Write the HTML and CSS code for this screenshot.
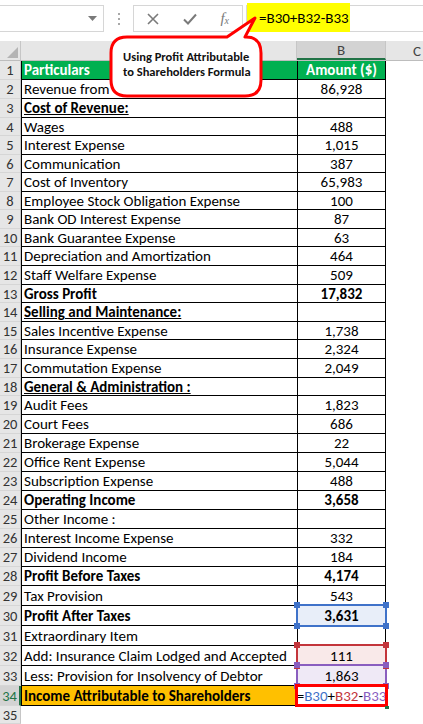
FILE: index.html
```html
<!DOCTYPE html>
<html>
<head>
<meta charset="utf-8">
<title>Income Attributable to Shareholders</title>
<link rel="stylesheet" href="styles.css">
</head>
<body>
<div class="fbar">
  <div class="namebox">
    <svg class="dd" width="9" height="5" viewBox="0 0 9 5"><path d="M0 0H9L4.5 5Z" fill="#7a7a7a"/></svg>
  </div>
  <div class="dots"><i></i><i></i><i></i></div>
  <div class="btns">
    <svg width="12" height="12" viewBox="0 0 12 12"><path d="M1 1L11 11M11 1L1 11" stroke="#7a7a7a" stroke-width="1.6" fill="none"/></svg>
    <svg width="14" height="12" viewBox="0 0 14 12"><path d="M1 6.5L5 10.5L13 1.5" stroke="#7a7a7a" stroke-width="2" fill="none"/></svg>
    <span class="fx">f<sub>x</sub></span>
  </div>
  <div class="formula"><span class="hl">=B30+B32-B33</span></div>
</div>

<div class="colheads">
  <div class="corner"><svg width="21" height="20" viewBox="0 0 21 20"><path d="M7 17H18V6Z" fill="#b4b4b4"/></svg></div>
  <div class="ch cha"></div>
  <div class="ch chb">B</div>
  <div class="ch chc">C</div>
</div>

<div class="grid">
  <div class="rh">1</div><div class="a head">Particulars</div><div class="b head">Amount ($)</div>
  <div class="rh">2</div><div class="a">Revenue from Operations</div><div class="b">86,928</div>
  <div class="rh">3</div><div class="a bold u">Cost of Revenue:</div><div class="b"></div>
  <div class="rh">4</div><div class="a">Wages</div><div class="b">488</div>
  <div class="rh">5</div><div class="a">Interest Expense</div><div class="b">1,015</div>
  <div class="rh">6</div><div class="a">Communication</div><div class="b">387</div>
  <div class="rh">7</div><div class="a">Cost of Inventory</div><div class="b">65,983</div>
  <div class="rh">8</div><div class="a">Employee Stock Obligation Expense</div><div class="b">100</div>
  <div class="rh">9</div><div class="a">Bank OD Interest Expense</div><div class="b">87</div>
  <div class="rh">10</div><div class="a">Bank Guarantee Expense</div><div class="b">63</div>
  <div class="rh">11</div><div class="a">Depreciation and Amortization</div><div class="b">464</div>
  <div class="rh">12</div><div class="a">Staff Welfare Expense</div><div class="b">509</div>
  <div class="rh">13</div><div class="a bold">Gross Profit</div><div class="b bold">17,832</div>
  <div class="rh">14</div><div class="a bold u">Selling and Maintenance:</div><div class="b"></div>
  <div class="rh">15</div><div class="a">Sales Incentive Expense</div><div class="b">1,738</div>
  <div class="rh">16</div><div class="a">Insurance Expense</div><div class="b">2,324</div>
  <div class="rh">17</div><div class="a">Commutation Expense</div><div class="b">2,049</div>
  <div class="rh">18</div><div class="a bold u">General &amp; Administration :</div><div class="b"></div>
  <div class="rh">19</div><div class="a">Audit Fees</div><div class="b">1,823</div>
  <div class="rh">20</div><div class="a">Court Fees</div><div class="b">686</div>
  <div class="rh">21</div><div class="a">Brokerage Expense</div><div class="b">22</div>
  <div class="rh">22</div><div class="a">Office Rent Expense</div><div class="b">5,044</div>
  <div class="rh">23</div><div class="a">Subscription Expense</div><div class="b">488</div>
  <div class="rh">24</div><div class="a bold">Operating Income</div><div class="b bold">3,658</div>
  <div class="rh">25</div><div class="a">Other Income :</div><div class="b"></div>
  <div class="rh">26</div><div class="a">Interest Income Expense</div><div class="b">332</div>
  <div class="rh">27</div><div class="a">Dividend Income</div><div class="b">184</div>
  <div class="rh">28</div><div class="a bold">Profit Before Taxes</div><div class="b bold">4,174</div>
  <div class="rh">29</div><div class="a">Tax Provision</div><div class="b">543</div>
  <div class="rh">30</div><div class="a bold">Profit After Taxes</div><div class="b bold ref blue">3,631<i class="h tl"></i><i class="h tr"></i><i class="h bl"></i><i class="h br"></i></div>
  <div class="rh">31</div><div class="a">Extraordinary Item</div><div class="b"></div>
  <div class="rh">32</div><div class="a">Add: Insurance Claim Lodged and Accepted</div><div class="b ref red">111<i class="h tl"></i><i class="h tr"></i><i class="h bl"></i><i class="h br"></i></div>
  <div class="rh">33</div><div class="a">Less: Provision for Insolvency of Debtor</div><div class="b ref purple">1,863<i class="h tl"></i><i class="h tr"></i><i class="h bl"></i><i class="h br"></i></div>
  <div class="rh rh-sel">34</div><div class="a bold total">Income Attributable to Shareholders</div><div class="b active"><span>=</span><span class="k-blue">B30</span><span>+</span><span class="k-red">B32</span><span>-</span><span class="k-purple">B33</span><i class="fill"></i></div>
  <div class="rh">35</div><div class="blank"></div><div class="blank"></div>
</div>

<div class="callout">
  <svg width="270" height="100" viewBox="0 0 270 100">
    <path d="M127 37H227L255 18L245 37H246Q261 37 261 53V80Q261 96 245 96H127Q111 96 111 80V53Q111 37 127 37Z" fill="#fff" stroke="#f00" stroke-width="3" stroke-linejoin="round"/>
  </svg>
  <p class="callout-text">Using Profit Attributable<br>to Shareholders Formula</p>
</div>
</body>
</html>
```

FILE: styles.css
```css
* { box-sizing: border-box; }

body {
  margin: 0;
  width: 423px;
  height: 724px;
  overflow: hidden;
  position: relative;
  background: #fff;
  font-family: Carlito, Lato, sans-serif;
  font-size: 15px;
  color: #000;
}

/* formula bar */
.fbar {
  display: flex;
  align-items: flex-start;
  height: 41px;
  padding-top: 5px;
}
.namebox {
  width: 104px;
  height: 27px;
  border: 1px solid #d6d6d6;
  border-left: none;
  display: flex;
  align-items: center;
  justify-content: flex-end;
  padding-right: 6px;
}
.dots {
  width: 29px;
  height: 27px;
  display: flex;
  flex-direction: column;
  align-items: center;
  justify-content: center;
  gap: 3px;
}
.dots i {
  width: 2px;
  height: 2px;
  background: #a8a8a8;
}
.btns {
  width: 110px;
  height: 27px;
  border: 1px solid #d6d6d6;
  display: flex;
  align-items: center;
  justify-content: space-between;
  padding: 0 13px 0 13px;
}
.fx {
  font-family: "Liberation Serif", serif;
  font-style: italic;
  color: #7a7a7a;
  font-size: 15px;
}
.fx sub {
  font-size: 10px;
  vertical-align: -1px;
}
.formula {
  flex: 1;
  height: 27px;
  margin-left: 3px;
  border: 1px solid #d6d6d6;
  border-right: none;
  display: flex;
}
.hl {
  background: #ffff00;
  width: 103px;
  margin-top: -3px;
  height: 29px;
  display: flex;
  align-items: center;
  padding-left: 12px;
  font-size: 15px;
  white-space: nowrap;
}

/* column headers */
.colheads {
  display: flex;
  height: 20px;
  background: #e6e6e6;
  border-bottom: 1px solid #bdbdbd;
}
.corner {
  width: 21px;
  flex: none;
  border-right: 1px solid #c6c6c6;
}
.corner svg { display: block; }
.ch {
  flex: none;
  border-right: 1px solid #c6c6c6;
  display: flex;
  align-items: center;
  justify-content: center;
  color: #444;
}
.cha { width: 276px; }
.chb {
  width: 89px;
  background: #d3d3d3;
  border-bottom: 2px solid #217346;
}
.chc {
  width: 37px;
  border-right: none;
  justify-content: flex-start;
  padding-left: 27px;
}

/* sheet */
.grid {
  display: grid;
  grid-template-columns: 21px 276px 89px;
  grid-template-rows:
    19px 19px 19px 18px 19px 18px 19px 18px 19px 18px 19px 19px 18px
    19px 18px 19px 19px 18px 19px 19px
    19px 19px 19px 19px 19px 19px 19px
    19px 20px 20px 20px 20px 20px 20px
    18px;
}
.rh {
  background: #e6e6e6;
  border-right: 1px solid #c6c6c6;
  border-bottom: 1px solid #d6d6d6;
  display: flex;
  align-items: center;
  justify-content: center;
  color: #333;
  font-size: 14.5px;
}
.rh-sel {
  background: #d3d3d3;
  color: #217346;
  border-right: 2px solid #217346;
}
.a, .b {
  display: flex;
  align-items: center;
  white-space: nowrap;
  overflow: hidden;
  border-left: 1px solid #000;
  border-bottom: 1px solid #000;
}
.a { padding-left: 2px; }
.b {
  justify-content: center;
  border-right: 1px solid #000;
  overflow: visible;
}
.bold { font-weight: bold; }
.u { text-decoration: underline; }
.head {
  background: #00b050;
  color: #fff;
  font-weight: bold;
}
.total { background: #ffc000; }

/* highlighted precedent cells */
.ref { position: relative; }
.ref::before {
  content: "";
  position: absolute;
  left: -2px;
  right: -2px;
  top: -2px;
  bottom: -2px;
  border: 2px solid var(--c);
}
.blue { --c: #3f72c9; background: #e8eef9; }
.red { --c: #c3353b; background: #f9e9e9; }
.purple { --c: #8a5ebf; background: #efe9f6; }
.h {
  position: absolute;
  width: 6px;
  height: 6px;
  background: var(--c);
  z-index: 1;
}
.h.tl { left: -4px; top: -4px; }
.h.tr { right: -4px; top: -4px; }
.h.bl { left: -4px; bottom: -4px; }
.h.br { right: -4px; bottom: -4px; }

.active {
  position: relative;
  background: #fff;
  z-index: 2;
}
.active::before {
  content: "";
  position: absolute;
  left: -3px;
  right: -3px;
  top: -2px;
  bottom: -2px;
  border: 3px solid #f00;
}
.k-blue { color: #3f72c9; }
.k-red { color: #c3353b; }
.k-purple { color: #8a5ebf; }
.fill {
  position: absolute;
  right: -4px;
  bottom: -4px;
  width: 4px;
  height: 3px;
  background: #217346;
}

/* callout */
.callout {
  position: absolute;
  left: 0;
  top: 0;
  width: 270px;
  height: 100px;
}
.callout svg { display: block; }
.callout-text {
  position: absolute;
  left: 123px;
  top: 49px;
  margin: 0;
  font-size: 12.5px;
  font-weight: bold;
  line-height: 15px;
  color: #111;
  white-space: nowrap;
}
```
